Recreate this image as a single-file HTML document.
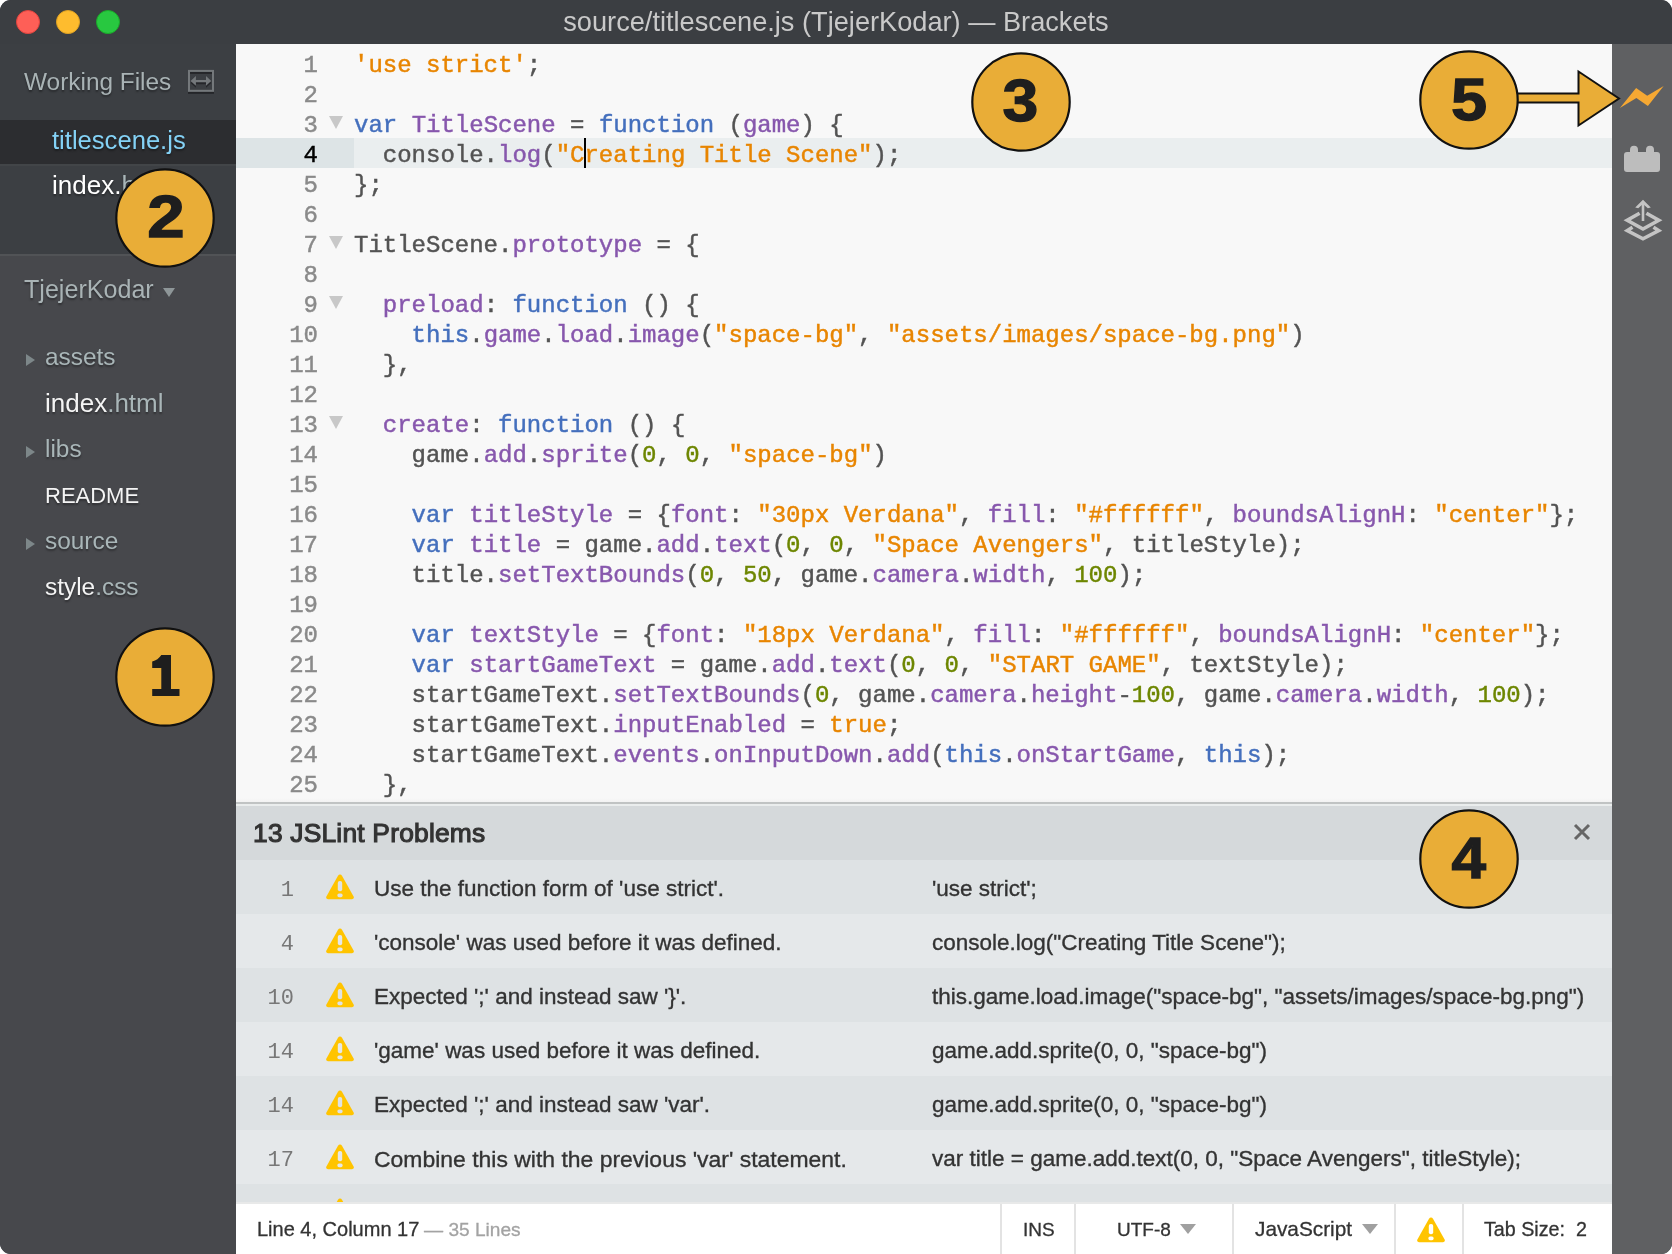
<!DOCTYPE html>
<html><head><meta charset="utf-8"><title>Brackets</title>
<style>
html,body{margin:0;padding:0;background:#fff;width:1672px;height:1254px;overflow:hidden;}
*{box-sizing:border-box;}
body{font-family:"Liberation Sans",sans-serif;}
.win{position:absolute;left:0;top:0;width:1672px;height:1254px;border-radius:11px;overflow:hidden;background:#3c3f43;will-change:transform;}
.abs{position:absolute;}
.titlebar{position:absolute;left:0;top:0;width:1672px;height:44px;background:#3b3e42;}
.light{position:absolute;top:10px;width:24px;height:24px;border-radius:50%;}
.title{position:absolute;left:0;width:1672px;top:6.5px;text-align:center;font-size:27.2px;line-height:30px;color:#c9c9c9;}
.sidebar{position:absolute;left:0;top:44px;width:236px;height:1210px;background:#47484c;}
.wf{position:absolute;left:0;top:0;width:236px;height:210px;background:#3c3f43;}
.sel{position:absolute;left:0;top:76px;width:236px;height:44px;background:#2c2d30;}
.sbt{position:absolute;white-space:nowrap;line-height:1;text-shadow:0 2px 2px rgba(0,0,0,0.35);}
.editor{position:absolute;left:236px;top:44px;width:1376px;height:758px;background:#f8f8f8;overflow:hidden;}
.gut{position:absolute;left:0;top:5px;width:82px;}
.ln{height:30px;line-height:30px;text-align:right;font-family:"Liberation Mono",monospace;font-size:24px;color:#8a8a8a;padding-top:2px;-webkit-text-stroke:0.45px currentColor;}
.ln.act{color:#000;}
.actg{position:absolute;left:0;top:94px;width:118px;height:30px;background:#dde4e6;}
.actc{position:absolute;left:118px;top:94px;width:1258px;height:30px;background:#eaeeef;}
.code{position:absolute;left:118px;top:5.2px;}
.cl{height:30px;line-height:30px;font-family:"Liberation Mono",monospace;font-size:24px;color:#535353;white-space:pre;padding-top:2px;-webkit-text-stroke:0.45px currentColor;}
.k{color:#446fbd}.d{color:#8757ad}.s{color:#e88501}.n{color:#6d8600}
.fold{position:absolute;left:93px;width:0;height:0;border-left:7px solid transparent;border-right:7px solid transparent;border-top:13px solid #c8c8c8;}
.cursor{position:absolute;left:348px;top:94px;width:2px;height:30px;background:#000;}
.panel{position:absolute;left:236px;top:802px;width:1376px;height:400px;background:#e5e8ea;overflow:hidden;}
.ptop{position:absolute;left:0;top:0;width:1376px;height:2px;background:#c0c3c3;}
.ptop2{position:absolute;left:0;top:2px;width:1376px;height:2px;background:#eaeded;}
.phead{position:absolute;left:0;top:4px;width:1376px;height:54px;background:#d5d9db;}
.phtxt{position:absolute;left:17px;top:12px;font-size:26.4px;font-weight:normal;-webkit-text-stroke:1.1px #333;letter-spacing:0.2px;color:#333;white-space:nowrap;}
.pclose{position:absolute;left:1337px;top:17px;}
.lrow{position:absolute;left:0;width:1376px;height:54px;}
.lln{position:absolute;left:0;width:58px;top:17.5px;text-align:right;font-family:"Liberation Mono",monospace;font-size:22px;color:#777;}
.warn{position:absolute;left:89px;top:13px;}
.lmsg{position:absolute;left:138px;top:16px;font-size:22.5px;color:#333;white-space:nowrap;-webkit-text-stroke:0.35px #333;}
.lsrc{position:absolute;left:696px;top:16px;font-size:22.5px;color:#333;white-space:nowrap;-webkit-text-stroke:0.35px #333;}
.status{position:absolute;left:236px;top:1202px;width:1376px;height:52px;background:#fff;border-top:2px solid #e8e9e9;}
.st{position:absolute;top:13px;font-size:21px;color:#333;white-space:nowrap;-webkit-text-stroke:0.3px currentColor;}
.div{position:absolute;top:0;width:2px;height:50px;background:#e3e3e3;}
.tri{position:absolute;width:0;height:0;border-left:8px solid transparent;border-right:8px solid transparent;border-top:10px solid #a0a0a0;}
.tool{position:absolute;left:1612px;top:44px;width:60px;height:1210px;background:#5f6062;}
.badge{position:absolute;width:100px;height:100px;}
.badge svg{display:block;}
</style></head><body>
<div class="win">
 <div class="titlebar">
  <div class="light" style="left:16px;background:#fe5f57;border:1px solid #e0443e"></div>
  <div class="light" style="left:56px;background:#febc2e;border:1px solid #dea123"></div>
  <div class="light" style="left:96px;background:#28c840;border:1px solid #1aab29"></div>
  <div class="title">source/titlescene.js (TjejerKodar) — Brackets</div>
 </div>

 <div class="sidebar">
  <div class="wf"></div>
  <div class="sel"></div>
  <div class="abs" style="left:0;top:120px;width:236px;height:2px;background:#424548"></div>
  <div class="abs" style="left:0;top:210px;width:236px;height:2px;background:#515356"></div>
  <div class="sbt" style="left:24px;top:25.8px;font-size:24.4px;color:#a9b3b5">Working Files</div>
  <svg class="abs" style="left:187px;top:25px" width="30" height="28" viewBox="0 0 30 28"><rect x="1" y="22.8" width="26" height="2" fill="#242528"/><rect x="3" y="2.9" width="22" height="2" fill="#25262a"/><path d="M3.6 13.9 L8.9 8.9 L8.9 12.9 L19 12.9 L19 8.9 L24.2 13.9 L19 18.8 L19 15.2 L8.9 15.2 L8.9 18.8 Z" fill="#25262a"/><path d="M3.6 11.9 L8.9 6.9 L8.9 10.9 L19 10.9 L19 6.9 L24.2 11.9 L19 16.8 L19 13.2 L8.9 13.2 L8.9 16.8 Z" fill="#74787b"/><rect x="2" y="1.9" width="24" height="19.9" fill="none" stroke="#74787b" stroke-width="2"/></svg>
  <div class="sbt" style="left:52px;top:84.4px;font-size:25.6px;color:#84d2f6">titlescene.js</div>
  <div class="sbt" style="left:52px;top:128.0px;font-size:26px;color:#fff">index.<span style="color:#a9b6b8">html</span></div>
  <div class="sbt" style="left:24px;top:233.0px;font-size:25.1px;color:#a9b3b5">TjejerKodar</div>
  <div class="abs" style="left:163px;top:244px;width:0;height:0;border-left:6px solid transparent;border-right:6px solid transparent;border-top:9px solid #8e9698"></div>
  <div class="sbt" style="left:45px;top:301.35px;font-size:24.4px;color:#a9b6b8">assets</div>
<div class="abs" style="left:26px;top:309.7px;width:0;height:0;border-top:6.5px solid transparent;border-bottom:6.5px solid transparent;border-left:9.5px solid #7d8789"></div>
<div class="sbt" style="left:45px;top:345.99px;font-size:26px;color:#f4f4f4">index<span style="color:#a9b6b8">.html</span></div>
<div class="sbt" style="left:45px;top:393.35px;font-size:24.4px;color:#a9b6b8">libs</div>
<div class="abs" style="left:26px;top:401.7px;width:0;height:0;border-top:6.5px solid transparent;border-bottom:6.5px solid transparent;border-left:9.5px solid #7d8789"></div>
<div class="sbt" style="left:45px;top:441.38px;font-size:22px;color:#f4f4f4">README</div>
<div class="sbt" style="left:45px;top:485.35px;font-size:24.4px;color:#a9b6b8">source</div>
<div class="abs" style="left:26px;top:493.7px;width:0;height:0;border-top:6.5px solid transparent;border-bottom:6.5px solid transparent;border-left:9.5px solid #7d8789"></div>
<div class="sbt" style="left:45px;top:531.35px;font-size:24.4px;color:#f4f4f4">style<span style="color:#a9b6b8">.css</span></div>
 </div>

 <div class="editor">
  <div class="actg"></div>
  <div class="actc"></div>
  <div class="gut">
<div class="ln">1</div>
<div class="ln">2</div>
<div class="ln">3</div>
<div class="ln act">4</div>
<div class="ln">5</div>
<div class="ln">6</div>
<div class="ln">7</div>
<div class="ln">8</div>
<div class="ln">9</div>
<div class="ln">10</div>
<div class="ln">11</div>
<div class="ln">12</div>
<div class="ln">13</div>
<div class="ln">14</div>
<div class="ln">15</div>
<div class="ln">16</div>
<div class="ln">17</div>
<div class="ln">18</div>
<div class="ln">19</div>
<div class="ln">20</div>
<div class="ln">21</div>
<div class="ln">22</div>
<div class="ln">23</div>
<div class="ln">24</div>
<div class="ln">25</div>
  </div>
<div class="fold" style="top:72px"></div>
<div class="fold" style="top:192px"></div>
<div class="fold" style="top:252px"></div>
<div class="fold" style="top:372px"></div>
  <div class="code">
<div class="cl"><span class="s">'use strict'</span>;</div>
<div class="cl"></div>
<div class="cl"><span class="k">var</span> <span class="d">TitleScene</span> = <span class="k">function</span> (<span class="d">game</span>) {</div>
<div class="cl">  console.<span class="d">log</span>(<span class="s">"Creating Title Scene"</span>);</div>
<div class="cl">};</div>
<div class="cl"></div>
<div class="cl">TitleScene.<span class="d">prototype</span> = {</div>
<div class="cl"></div>
<div class="cl">  <span class="d">preload</span>: <span class="k">function</span> () {</div>
<div class="cl">    <span class="k">this</span>.<span class="d">game</span>.<span class="d">load</span>.<span class="d">image</span>(<span class="s">"space-bg"</span>, <span class="s">"assets/images/space-bg.png"</span>)</div>
<div class="cl">  },</div>
<div class="cl"></div>
<div class="cl">  <span class="d">create</span>: <span class="k">function</span> () {</div>
<div class="cl">    game.<span class="d">add</span>.<span class="d">sprite</span>(<span class="n">0</span>, <span class="n">0</span>, <span class="s">"space-bg"</span>)</div>
<div class="cl"></div>
<div class="cl">    <span class="k">var</span> <span class="d">titleStyle</span> = {<span class="d">font</span>: <span class="s">"30px Verdana"</span>, <span class="d">fill</span>: <span class="s">"#ffffff"</span>, <span class="d">boundsAlignH</span>: <span class="s">"center"</span>};</div>
<div class="cl">    <span class="k">var</span> <span class="d">title</span> = game.<span class="d">add</span>.<span class="d">text</span>(<span class="n">0</span>, <span class="n">0</span>, <span class="s">"Space Avengers"</span>, titleStyle);</div>
<div class="cl">    title.<span class="d">setTextBounds</span>(<span class="n">0</span>, <span class="n">50</span>, game.<span class="d">camera</span>.<span class="d">width</span>, <span class="n">100</span>);</div>
<div class="cl"></div>
<div class="cl">    <span class="k">var</span> <span class="d">textStyle</span> = {<span class="d">font</span>: <span class="s">"18px Verdana"</span>, <span class="d">fill</span>: <span class="s">"#ffffff"</span>, <span class="d">boundsAlignH</span>: <span class="s">"center"</span>};</div>
<div class="cl">    <span class="k">var</span> <span class="d">startGameText</span> = game.<span class="d">add</span>.<span class="d">text</span>(<span class="n">0</span>, <span class="n">0</span>, <span class="s">"START GAME"</span>, textStyle);</div>
<div class="cl">    startGameText.<span class="d">setTextBounds</span>(<span class="n">0</span>, game.<span class="d">camera</span>.<span class="d">height</span>-<span class="n">100</span>, game.<span class="d">camera</span>.<span class="d">width</span>, <span class="n">100</span>);</div>
<div class="cl">    startGameText.<span class="d">inputEnabled</span> = <span class="s">true</span>;</div>
<div class="cl">    startGameText.<span class="d">events</span>.<span class="d">onInputDown</span>.<span class="d">add</span>(<span class="k">this</span>.<span class="d">onStartGame</span>, <span class="k">this</span>);</div>
<div class="cl">  },</div>
  </div>
  <div class="cursor"></div>
  <div class="abs" style="left:0;top:754px;width:1376px;height:4px;background:linear-gradient(rgba(0,0,0,0),rgba(0,0,0,0.025))"></div>
 </div>

 <div class="panel">
  <div class="ptop"></div><div class="ptop2"></div>
  <div class="phead"><div class="phtxt">13 JSLint Problems</div>
   <svg class="pclose" width="18" height="18" viewBox="0 0 18 18"><path d="M2 2 L16 16 M16 2 L2 16" stroke="#666" stroke-width="3"/></svg>
  </div>
<div class="lrow" style="top:58px;background:#dee2e4"><div class="lln">1</div><svg class="warn" width="30" height="28" viewBox="0 0 30 28"><path d="M15 1.5 Q16.2 1.5 17 2.8 L28.6 23.6 Q29.6 26 27 26.2 L3 26.2 Q0.4 26 1.4 23.6 L13 2.8 Q13.8 1.5 15 1.5Z" fill="#ffc400"/><rect x="12.8" y="8" width="4.4" height="10.2" rx="2" fill="#dee2e4"/><rect x="12.4" y="20.4" width="5.2" height="3.8" rx="1.6" fill="#dee2e4"/></svg><div class="lmsg">Use the function form of 'use strict'.</div><div class="lsrc">'use strict';</div></div>
<div class="lrow" style="top:112px;background:#e5e8ea"><div class="lln">4</div><svg class="warn" width="30" height="28" viewBox="0 0 30 28"><path d="M15 1.5 Q16.2 1.5 17 2.8 L28.6 23.6 Q29.6 26 27 26.2 L3 26.2 Q0.4 26 1.4 23.6 L13 2.8 Q13.8 1.5 15 1.5Z" fill="#ffc400"/><rect x="12.8" y="8" width="4.4" height="10.2" rx="2" fill="#e5e8ea"/><rect x="12.4" y="20.4" width="5.2" height="3.8" rx="1.6" fill="#e5e8ea"/></svg><div class="lmsg">'console' was used before it was defined.</div><div class="lsrc">console.log("Creating Title Scene");</div></div>
<div class="lrow" style="top:166px;background:#dee2e4"><div class="lln">10</div><svg class="warn" width="30" height="28" viewBox="0 0 30 28"><path d="M15 1.5 Q16.2 1.5 17 2.8 L28.6 23.6 Q29.6 26 27 26.2 L3 26.2 Q0.4 26 1.4 23.6 L13 2.8 Q13.8 1.5 15 1.5Z" fill="#ffc400"/><rect x="12.8" y="8" width="4.4" height="10.2" rx="2" fill="#dee2e4"/><rect x="12.4" y="20.4" width="5.2" height="3.8" rx="1.6" fill="#dee2e4"/></svg><div class="lmsg">Expected ';' and instead saw '}'.</div><div class="lsrc">this.game.load.image("space-bg", "assets/images/space-bg.png")</div></div>
<div class="lrow" style="top:220px;background:#e5e8ea"><div class="lln">14</div><svg class="warn" width="30" height="28" viewBox="0 0 30 28"><path d="M15 1.5 Q16.2 1.5 17 2.8 L28.6 23.6 Q29.6 26 27 26.2 L3 26.2 Q0.4 26 1.4 23.6 L13 2.8 Q13.8 1.5 15 1.5Z" fill="#ffc400"/><rect x="12.8" y="8" width="4.4" height="10.2" rx="2" fill="#e5e8ea"/><rect x="12.4" y="20.4" width="5.2" height="3.8" rx="1.6" fill="#e5e8ea"/></svg><div class="lmsg">'game' was used before it was defined.</div><div class="lsrc">game.add.sprite(0, 0, "space-bg")</div></div>
<div class="lrow" style="top:274px;background:#dee2e4"><div class="lln">14</div><svg class="warn" width="30" height="28" viewBox="0 0 30 28"><path d="M15 1.5 Q16.2 1.5 17 2.8 L28.6 23.6 Q29.6 26 27 26.2 L3 26.2 Q0.4 26 1.4 23.6 L13 2.8 Q13.8 1.5 15 1.5Z" fill="#ffc400"/><rect x="12.8" y="8" width="4.4" height="10.2" rx="2" fill="#dee2e4"/><rect x="12.4" y="20.4" width="5.2" height="3.8" rx="1.6" fill="#dee2e4"/></svg><div class="lmsg">Expected ';' and instead saw 'var'.</div><div class="lsrc">game.add.sprite(0, 0, "space-bg")</div></div>
<div class="lrow" style="top:328px;background:#e5e8ea"><div class="lln">17</div><svg class="warn" width="30" height="28" viewBox="0 0 30 28"><path d="M15 1.5 Q16.2 1.5 17 2.8 L28.6 23.6 Q29.6 26 27 26.2 L3 26.2 Q0.4 26 1.4 23.6 L13 2.8 Q13.8 1.5 15 1.5Z" fill="#ffc400"/><rect x="12.8" y="8" width="4.4" height="10.2" rx="2" fill="#e5e8ea"/><rect x="12.4" y="20.4" width="5.2" height="3.8" rx="1.6" fill="#e5e8ea"/></svg><div class="lmsg" style="font-size:22.95px">Combine this with the previous 'var' statement.</div><div class="lsrc">var title = game.add.text(0, 0, "Space Avengers", titleStyle);</div></div>
<div class="lrow" style="top:382px;background:#dee2e4"><div class="lln"></div><svg class="warn" width="30" height="28" viewBox="0 0 30 28"><path d="M15 1.5 Q16.2 1.5 17 2.8 L28.6 23.6 Q29.6 26 27 26.2 L3 26.2 Q0.4 26 1.4 23.6 L13 2.8 Q13.8 1.5 15 1.5Z" fill="#ffc400"/><rect x="12.8" y="8" width="4.4" height="10.2" rx="2" fill="#dee2e4"/><rect x="12.4" y="20.4" width="5.2" height="3.8" rx="1.6" fill="#dee2e4"/></svg><div class="lmsg"></div><div class="lsrc"></div></div>
 </div>

 <div class="status">
  <div class="st" style="left:21px;top:14px;font-size:20px">Line 4, Column 17</div>
  <div class="st" style="left:188px;top:14.8px;font-size:19.1px;color:#a3a3a3">— 35 Lines</div>
  <div class="div" style="left:764px"></div>
  <div class="st" style="left:787px;top:14.8px;font-size:19px">INS</div>
  <div class="div" style="left:838px"></div>
  <div class="st" style="left:881px;top:14.8px;font-size:19px">UTF-8</div>
  <div class="tri" style="left:944px;top:20px"></div>
  <div class="div" style="left:996px"></div>
  <div class="st" style="left:1019px;top:13.2px;font-size:20.8px">JavaScript</div>
  <div class="tri" style="left:1126px;top:20px"></div>
  <div class="div" style="left:1158px"></div>
  <svg class="abs" style="left:1180px;top:12px" width="30" height="28" viewBox="0 0 30 28"><path d="M15 1.5 Q16.2 1.5 17 2.8 L28.6 23.6 Q29.6 26 27 26.2 L3 26.2 Q0.4 26 1.4 23.6 L13 2.8 Q13.8 1.5 15 1.5Z" fill="#ffc400"/><rect x="12.8" y="8" width="4.4" height="10.2" rx="2" fill="#fff"/><rect x="12.4" y="20.4" width="5.2" height="3.8" rx="1.6" fill="#fff"/></svg>
  <div class="div" style="left:1226px"></div>
  <div class="st" style="left:1248px;top:14.2px;font-size:19.7px">Tab Size:&nbsp; 2</div>
 </div>

 <div class="tool">
  <svg class="abs" style="left:0;top:36px" width="60" height="30" viewBox="1612 80 60 30"><path d="M1619.9 108 L1636.1 87.9 L1647.2 95.8 L1663.7 86.1 L1647.9 105.9 L1636.4 98 Z" fill="#f5a833"/></svg>
  <svg class="abs" style="left:0;top:96px" width="60" height="36" viewBox="1612 140 60 36"><rect x="1624" y="152" width="36" height="20" rx="3" fill="#bdbdbd"/><rect x="1630" y="145.8" width="8" height="10" rx="4" fill="#bdbdbd"/><rect x="1646" y="145.8" width="8" height="10" rx="4" fill="#bdbdbd"/></svg>
  <svg class="abs" style="left:0;top:152px" width="60" height="46" viewBox="1612 196 60 46"><path d="M1643 221 L1643 203" stroke="#c4c4c4" stroke-width="2.6" fill="none"/><path d="M1643 199.8 L1650.8 207.6 L1647.8 208.3 L1643 204 L1638.2 208.3 L1635.2 207.6 Z" fill="#c4c4c4"/><path d="M1639.6 213.2 L1627.2 220.3 L1643 229 L1658.8 220.3 L1646.4 213.2" stroke="#c4c4c4" stroke-width="3.6" fill="none"/><path d="M1632.5 227.2 L1627.2 230.6 L1643 238.8 L1658.8 230.6 L1653.5 227.2" stroke="#c4c4c4" stroke-width="3.5" fill="none"/></svg>
 </div>

 <svg class="abs" style="left:1510px;top:66px" width="115" height="64" viewBox="1510 66 115 64"><path d="M1517 93.5 L1578.5 93.5 L1578.5 71.5 L1619 98.5 L1578.5 125.5 L1578.5 102.5 L1517 102.5 Z" fill="#e9ad37" stroke="#111" stroke-width="2"/></svg>
<div class="badge" style="left:115px;top:168px"><svg width="100" height="100" viewBox="0 0 100 100"><circle cx="50" cy="50" r="48.7" fill="#e9ad37" stroke="#111" stroke-width="2.2"/><g transform="translate(51 0) scale(1.14 1)"><text x="0" y="69" text-anchor="middle" font-family="Liberation Sans" font-weight="bold" font-size="59" fill="#1e1e1e" stroke="#1e1e1e" stroke-width="1.3">2</text></g></svg></div><div class="badge" style="left:115px;top:627px"><svg width="100" height="100" viewBox="0 0 100 100"><circle cx="50" cy="50" r="48.7" fill="#e9ad37" stroke="#111" stroke-width="2.2"/><path d="M37.2 34.5 Q43 33 46.3 28 L56 28 L56 62 L64.5 62 L64.5 69 L37.2 69 L37.2 62 L46.3 62 L46.3 41 L37.2 41 Z" fill="#1e1e1e"/></svg></div><div class="badge" style="left:971px;top:52px"><svg width="100" height="100" viewBox="0 0 100 100"><circle cx="50" cy="50" r="48.7" fill="#e9ad37" stroke="#111" stroke-width="2.2"/><g transform="translate(49.5 0) scale(1.09 1)"><text x="0" y="69.5" text-anchor="middle" font-family="Liberation Sans" font-weight="bold" font-size="59" fill="#1e1e1e" stroke="#1e1e1e" stroke-width="1.3">3</text></g></svg></div><div class="badge" style="left:1419px;top:809px"><svg width="100" height="100" viewBox="0 0 100 100"><circle cx="50" cy="50" r="48.7" fill="#e9ad37" stroke="#111" stroke-width="2.2"/><g transform="translate(49.7 0) scale(1.08 1)"><text x="0" y="69.5" text-anchor="middle" font-family="Liberation Sans" font-weight="bold" font-size="57.5" fill="#1e1e1e" stroke="#1e1e1e" stroke-width="1.3">4</text></g></svg></div><div class="badge" style="left:1419px;top:50px"><svg width="100" height="100" viewBox="0 0 100 100"><circle cx="50" cy="50" r="48.7" fill="#e9ad37" stroke="#111" stroke-width="2.2"/><g transform="translate(50.1 0) scale(1.1 1)"><text x="0" y="69.8" text-anchor="middle" font-family="Liberation Sans" font-weight="bold" font-size="59" fill="#1e1e1e" stroke="#1e1e1e" stroke-width="1.3">5</text></g></svg></div>
</div>
</body></html>
